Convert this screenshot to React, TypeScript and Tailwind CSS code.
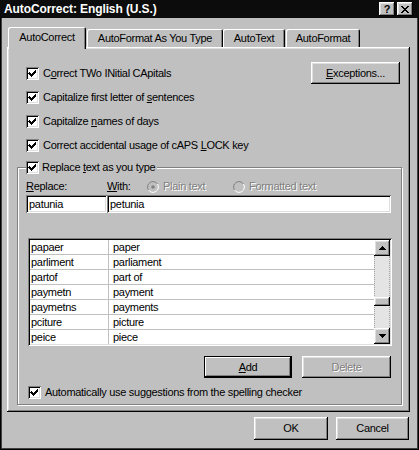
import React from "react";

const raised =
  "shadow-[inset_-1px_-1px_0_#000,inset_1px_1px_0_#fff,inset_-2px_-2px_0_#808080,inset_2px_2px_0_#dfdfdf]";
const sunken =
  "shadow-[inset_1px_1px_0_#808080,inset_-1px_-1px_0_#fff,inset_2px_2px_0_#000,inset_-2px_-2px_0_#dfdfdf]";

function CheckBox() {
  return (
    <span className={`inline-block w-[13px] h-[13px] bg-white shrink-0 ${sunken}`}>
      <svg width="13" height="13" viewBox="0 0 13 13" shapeRendering="crispEdges">
        <path d="M3 5h1v1h1v1h1v-1h1v-1h1v-1h1v-1h1v3h-1v1h-1v1h-1v1h-1v1h-1v-1h-1v-1h-1v-1h-1z" fill="#000" />
      </svg>
    </span>
  );
}

function Radio({ checked }: { checked?: boolean }) {
  return (
    <svg width="12" height="12" viewBox="0 0 12 12" className="shrink-0">
      <path d="M10.5 3 A5 5 0 0 0 1.5 9" stroke="#808080" strokeWidth="1" fill="none" />
      <path d="M1.5 9 A5 5 0 0 0 10.5 3" stroke="#fff" strokeWidth="1" fill="none" />
      <circle cx="6" cy="6" r="4" fill="#c0c0c0" />
      {checked && <circle cx="6" cy="6" r="1.8" fill="#808080" />}
    </svg>
  );
}

function U({ children }: { children: React.ReactNode }) {
  return <span className="underline underline-offset-[1px]">{children}</span>;
}

const rows: [string, string][] = [
  ["papaer", "paper"],
  ["parliment", "parliament"],
  ["partof", "part of"],
  ["paymetn", "payment"],
  ["paymetns", "payments"],
  ["pciture", "picture"],
  ["peice", "piece"],
];

export default function App() {
  return (
    <div className="w-[419px] h-[450px] bg-[#c0c0c0] text-black text-[11px] tracking-[-0.3px] leading-none font-['Liberation_Sans',Arial,sans-serif] flex flex-col shadow-[inset_1px_0_0_#000,inset_-1px_-1px_0_#000,inset_-2px_-2px_0_#404040,inset_2px_0_0_#404040] overflow-hidden">
      {/* Title bar */}
      <div className="h-[18px] bg-[#0c0c0c] flex items-center pl-[4px] pr-[6px] shrink-0">
        <span className="text-white font-bold text-[12px] tracking-[-0.1px]">AutoCorrect: English (U.S.)</span>
        <div className="ml-auto flex gap-[2px]">
          <div className={`w-[16px] h-[14px] bg-[#c0c0c0] flex items-center justify-center font-bold text-[11px] ${raised}`}>?</div>
          <div className={`w-[16px] h-[14px] bg-[#c0c0c0] flex items-center justify-center ${raised}`}>
            <svg width="8" height="7" viewBox="0 0 8 7" shapeRendering="crispEdges">
              <path d="M0 0h2v1h1v1h2v-1h1v-1h2v1h-1v1h-1v1h-1v1h1v1h1v1h1v1h-2v-1h-1v-1h-2v1h-1v1h-2v-1h1v-1h1v-1h1v-1h-1v-1h-1v-1h-1z" fill="#000" />
            </svg>
          </div>
        </div>
      </div>

      {/* Tabs */}
      <div className="mt-[9px] ml-[8px] h-[20px] flex items-end shrink-0">
        <div className="relative z-10 w-[78px] h-[22px] -mb-[2px] bg-[#c0c0c0] flex items-center justify-center pb-[2px] shadow-[inset_1px_1px_0_#fff,inset_-1px_0_0_#000,inset_-2px_0_0_#808080] rounded-t-[2px]">
          AutoCorrect
        </div>
        <div className="w-[136px] h-[18px] ml-[1px] flex items-center justify-center shadow-[inset_1px_1px_0_#fff,inset_-1px_0_0_#000,inset_-2px_0_0_#808080] rounded-t-[2px]">
          AutoFormat As You Type
        </div>
        <div className="w-[62px] h-[18px] flex items-center justify-center shadow-[inset_1px_1px_0_#fff,inset_-1px_0_0_#000,inset_-2px_0_0_#808080] rounded-t-[2px]">
          AutoText
        </div>
        <div className="w-[74px] h-[18px] ml-[1px] flex items-center justify-center shadow-[inset_1px_1px_0_#fff,inset_-1px_0_0_#000,inset_-2px_0_0_#808080] rounded-t-[2px]">
          AutoFormat
        </div>
      </div>

      {/* Panel */}
      <div className={`ml-[7px] w-[403px] h-[365px] flex flex-col pt-[14px] shrink-0 ${raised}`}>
        <div className="h-[24px] flex items-center pl-[19px] pr-[10px]">
          <CheckBox />
          <span className="ml-[4px]">C<U>o</U>rrect TWo INitial CApitals</span>
          <div className={`ml-auto w-[89px] h-[22px] flex items-center justify-center ${raised}`}>
            <span><U>E</U>xceptions...</span>
          </div>
        </div>
        <div className="h-[24px] flex items-center pl-[19px]">
          <CheckBox />
          <span className="ml-[4px]">Capitalize first letter of <U>s</U>entences</span>
        </div>
        <div className="h-[24px] flex items-center pl-[19px]">
          <CheckBox />
          <span className="ml-[4px]">Capitalize <U>n</U>ames of days</span>
        </div>
        <div className="h-[24px] flex items-center pl-[19px]">
          <CheckBox />
          <span className="ml-[4px]">Correct accidental usage of cAPS <U>L</U>OCK key</span>
        </div>

        {/* Group box */}
        <div className="relative mt-[10px] ml-[10px] w-[385px] h-[238px] border border-[#808080] shadow-[inset_1px_1px_0_#fff,1px_1px_0_#fff] flex flex-col pt-[11px]">
          <div className="absolute left-[8px] -top-[7px] h-[13px] flex items-center bg-[#c0c0c0] pr-[2px]">
            <CheckBox />
            <span className="ml-[3px]">Replace <U>t</U>ext as you type</span>
          </div>

          <div className="h-[15px] flex items-center pl-[8px]">
            <span className="w-[81px]"><U>R</U>eplace:</span>
            <span className="w-[40px]"><U>W</U>ith:</span>
            <Radio checked />
            <span className="ml-[4px] w-[70px] text-[#808080] [text-shadow:1px_1px_0_#fff]">Plain text</span>
            <Radio />
            <span className="ml-[4px] text-[#808080] [text-shadow:1px_1px_0_#fff]">Formatted text</span>
          </div>

          <div className="mt-[1px] flex pl-[8px]">
            <div className={`w-[81px] h-[18px] bg-white flex items-center pl-[3px] ${sunken}`}>patunia</div>
            <div className={`w-[284px] h-[18px] bg-white flex items-center pl-[3px] ${sunken}`}>petunia</div>
          </div>

          {/* List */}
          <div className={`mt-[25px] ml-[10px] w-[364px] h-[108px] bg-white p-[2px] flex ${sunken}`}>
            <div className="flex-1 flex flex-col overflow-hidden">
              {rows.map(([a, b]) => (
                <div key={a} className="h-[15px] shrink-0 flex border-b border-[#c0c0c0]">
                  <div className="w-[79px] pl-[1px] flex items-center border-r border-[#c0c0c0]">{a}</div>
                  <div className="pl-[4px] flex items-center">{b}</div>
                </div>
              ))}
            </div>
            <div className="w-[16px] flex flex-col bg-[#e4e4e4]">
              <div className={`h-[16px] bg-[#c0c0c0] flex items-center justify-center ${raised}`}>
                <svg width="7" height="4" viewBox="0 0 7 4" shapeRendering="crispEdges">
                  <path d="M3 0h1v1h1v1h1v1h1v1h-7v-1h1v-1h1v-1h1z" fill="#000" />
                </svg>
              </div>
              <div className="flex-1 flex flex-col border-x border-dotted border-[#a0a0a0]">
                <div className="h-[41px]" />
                <div className={`h-[9px] bg-[#c0c0c0] -mx-[1px] ${raised}`} />
              </div>
              <div className={`h-[16px] bg-[#c0c0c0] flex items-center justify-center ${raised}`}>
                <svg width="7" height="4" viewBox="0 0 7 4" shapeRendering="crispEdges">
                  <path d="M0 0h7v1h-1v1h-1v1h-1v1h-1v-1h-1v-1h-1v-1h-1z" fill="#000" />
                </svg>
              </div>
            </div>
          </div>

          {/* Buttons */}
          <div className="mt-[10px] flex justify-end gap-[10px] pr-[10px]">
            <div className={`w-[88px] h-[22px] flex items-center justify-center border border-black shadow-[inset_-1px_-1px_0_#000,inset_1px_1px_0_#fff,inset_-2px_-2px_0_#808080]`}>
              <span><U>A</U>dd</span>
            </div>
            <div className={`w-[89px] h-[22px] flex items-center justify-center ${raised}`}>
              <span className="text-[#808080] [text-shadow:1px_1px_0_#fff]">Delete</span>
            </div>
          </div>

          <div className="mt-[7px] h-[14px] flex items-center pl-[10px]">
            <CheckBox />
            <span className="ml-[4px]">Automatically use su<U>g</U>gestions from the spelling checker</span>
          </div>
        </div>
      </div>

      {/* Footer */}
      <div className="mt-[5px] flex justify-end gap-[8px] pr-[10px]">
        <div className={`w-[74px] h-[23px] flex items-center justify-center ${raised}`}>OK</div>
        <div className={`w-[73px] h-[23px] flex items-center justify-center ${raised}`}>Cancel</div>
      </div>
    </div>
  );
}
